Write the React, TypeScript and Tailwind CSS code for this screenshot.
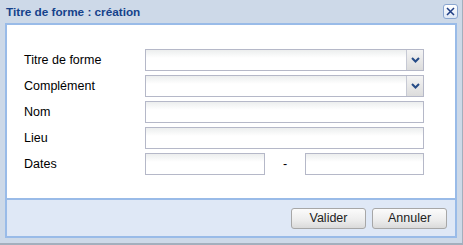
import React from "react";

function TextField({ className = "" }: { className?: string }) {
  return (
    <div
      className={`h-[22px] border border-[#b5b8c8] bg-gradient-to-b from-[#eceeee] via-white via-40% to-white ${className}`}
    />
  );
}

function ComboField() {
  return (
    <div className="flex h-[22px] w-[279px] border border-[#b5b8c8]">
      <div className="flex-1 bg-gradient-to-b from-[#eceeee] via-white via-40% to-white" />
      <div className="flex w-[17px] items-center justify-center border-l border-[#c6c9d4] bg-gradient-to-b from-[#f4f4f4] to-[#dcdcdc]">
        <svg width="9" height="6" viewBox="0 0 9 6">
          <path d="M1 1 L4.5 4.5 L8 1" fill="none" stroke="#264c87" strokeWidth="2" />
        </svg>
      </div>
    </div>
  );
}

function Row({ label, children }: { label: string; children: React.ReactNode }) {
  return (
    <div className="flex h-[22px] items-center">
      <div className="w-[121px] text-[12.5px] text-black">{label}</div>
      {children}
    </div>
  );
}

function Button({ label }: { label: string }) {
  return (
    <button className="h-[21px] w-[75px] rounded-[3px] border border-[#a7a7a7] bg-gradient-to-b from-[#fbfbfb] via-[#ececec] via-60% to-[#dadada] text-[12.5px] text-[#222]">
      {label}
    </button>
  );
}

export default function App() {
  return (
    <div
      className="flex h-[245px] w-[463px] flex-col border-b-2 border-r border-[#a3afbd] bg-[#cdd9e8]"
      style={{ fontFamily: "'Liberation Sans', Arial, sans-serif" }}
    >
      <div className="flex h-[23px] items-center justify-between pl-[6px] pr-[4px]">
        <span className="text-[11.75px] font-bold text-[#15428b]">Titre de forme : création</span>
        <div className="flex h-[15px] w-[15px] items-center justify-center rounded-[3px] border border-[#8aa6d0] bg-gradient-to-b from-white to-[#dde7f5]">
          <svg width="9" height="9" viewBox="0 0 9 9">
            <path d="M1 1 L8 8 M8 1 L1 8" stroke="#1f3e84" strokeWidth="1.5" />
          </svg>
        </div>
      </div>
      <div className="mx-[5px] mb-[5px] flex flex-1 flex-col border-2 border-[#99bbe8]">
        <div className="flex h-[173px] flex-col gap-[4px] bg-white pl-[17px] pt-[24px]">
          <Row label="Titre de forme">
            <ComboField />
          </Row>
          <Row label="Complément">
            <ComboField />
          </Row>
          <Row label="Nom">
            <TextField className="w-[279px]" />
          </Row>
          <Row label="Lieu">
            <TextField className="w-[279px]" />
          </Row>
          <Row label="Dates">
            <TextField className="w-[120px]" />
            <span className="w-[40px] text-center text-[12.5px]">-</span>
            <TextField className="w-[119px]" />
          </Row>
        </div>
        <div className="flex flex-1 items-center justify-end gap-[6px] border-t-2 border-[#99bbe8] bg-[#dfe8f6] pr-[8px]">
          <Button label="Valider" />
          <Button label="Annuler" />
        </div>
      </div>
    </div>
  );
}
